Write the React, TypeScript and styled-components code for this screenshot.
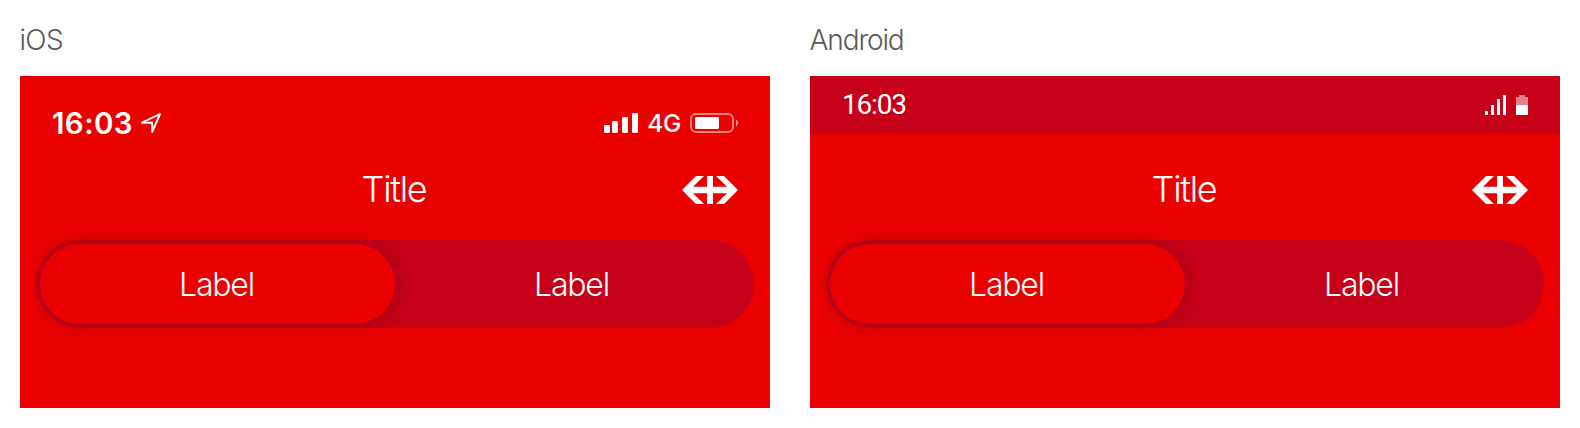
import React from 'react';
import styled, { createGlobalStyle } from 'styled-components';

const red = '#eb0000';
const darkRed = '#c60018';

const GlobalStyle = createGlobalStyle`
  * { box-sizing: border-box; }
  body {
    margin: 0;
    background: #fff;
    font-family: Inter, "Liberation Sans", sans-serif;
  }
`;

const Page = styled.main`
  display: flex;
  gap: 40px;
  height: 428px;
  padding: 0 20px;
  overflow: hidden;
`;

const Platform = styled.section`
  width: 750px;
`;

const Heading = styled.h2<{ $tracking: number }>`
  margin: 0;
  height: 76px;
  padding-top: 20px;
  font-size: 28px;
  line-height: 41px;
  font-weight: 300;
  letter-spacing: ${(p) => p.$tracking}px;
  text-indent: -0.5px;
  color: #5a5a5a;
`;

const Screen = styled.div`
  display: flex;
  flex-direction: column;
  height: 332px;
  padding-bottom: 80px;
  background: ${red};
  color: #fff;
`;

const IosStatus = styled.div`
  display: flex;
  align-items: center;
  justify-content: space-between;
  height: 94px;
  padding: 0 32px;
`;

const AndroidStatus = styled(IosStatus)`
  height: 58px;
  background: ${darkRed};
`;

const Group = styled.div<{ $gap: number }>`
  display: flex;
  align-items: center;
  gap: ${(p) => p.$gap}px;
`;

const IosTime = styled.span`
  font-size: 29.5px;
  line-height: 36px;
  font-weight: 600;
  letter-spacing: 0.4px;
`;

const Network = styled.span`
  font-size: 24.5px;
  line-height: 30px;
  font-weight: 550;
  letter-spacing: -0.3px;
`;

const AndroidTime = styled.span`
  font-family: Roboto, sans-serif;
  font-size: 28px;
  line-height: 34px;
  letter-spacing: -1.2px;
`;

const NavBar = styled.header`
  display: grid;
  grid-template-columns: 1fr auto 1fr;
  align-items: center;
  height: 40px;
  margin: auto 32px 30px;
`;

const Title = styled.h1`
  grid-column: 2;
  margin: 0;
  padding: 0 2px 2px 0;
  font-size: 36px;
  line-height: 38px;
  font-weight: 300;
  letter-spacing: -1.3px;
`;

const LogoSlot = styled.div`
  display: flex;
  justify-content: flex-end;
`;

const Segmented = styled.div`
  display: flex;
  height: 88px;
  margin: 0 16px;
  padding: 4px;
  border-radius: 44px;
  background: ${darkRed};
`;

const Segment = styled.button<{ $active?: boolean }>`
  flex: 1;
  padding: 2px 2px 0 0;
  border: 0;
  border-radius: 40px;
  background: ${(p) => (p.$active ? red : 'transparent')};
  box-shadow: ${(p) => (p.$active ? '0 0 20px rgba(0, 0, 0, 0.2)' : 'none')};
  color: #fff;
  font: 300 32px/40px Inter, "Liberation Sans", sans-serif;
  letter-spacing: -1.2px;
`;

const Logo = () => (
  <svg width="56" height="28" viewBox="0 0 56 28" fill="#fff">
    <path d="M14 0H22L11 10.8H25V0H31V10.8H45L34 0H42L56 14L42 28H34L45 17.2H31V28H25V17.2H11L22 28H14L0 14Z" />
  </svg>
);

const LocationArrow = () => (
  <svg width="20" height="20" viewBox="0 0 20 20" fill="none" stroke="#fff" strokeWidth="1.9" strokeLinejoin="round">
    <path d="M19 1L1 9.7H11.2V19Z" />
  </svg>
);

const IosSignal = () => (
  <svg width="34" height="20" viewBox="0 0 34 20" fill="#fff">
    <rect x="0" y="12" width="6" height="8" rx="1.4" />
    <rect x="8" y="8" width="6" height="12" rx="1.4" />
    <rect x="18" y="4" width="6" height="16" rx="1.4" />
    <rect x="28" y="0" width="6" height="20" rx="1.4" />
  </svg>
);

const IosBattery = () => (
  <svg width="48" height="20" viewBox="0 0 48 20">
    <rect x="1" y="1" width="42" height="18" rx="5" fill="none" stroke="#fff" strokeOpacity="0.5" strokeWidth="2" />
    <rect x="5" y="4" width="24" height="12" rx="1.5" fill="#fff" />
    <path d="M46 6.5Q48 7.6 48 10T46 13.5Z" fill="#fff" fillOpacity="0.7" />
  </svg>
);

const AndroidSignal = () => (
  <svg width="21" height="20" viewBox="0 0 21 20" fill="#fff">
    <path d="M0 16H3V20H0ZM6 10H9V20H6ZM12 4H15V20H12ZM18 0H21V20H18Z" />
  </svg>
);

const AndroidBattery = () => (
  <svg width="12" height="20" viewBox="0 0 12 20" fill="#fff">
    <path d="M3 0H9V2H12V10H0V2H3Z" fillOpacity="0.5" />
    <path d="M0 10H12V20H0Z" />
  </svg>
);

const Content = () => (
  <>
    <NavBar>
      <Title>Title</Title>
      <LogoSlot><Logo /></LogoSlot>
    </NavBar>
    <Segmented>
      <Segment $active>Label</Segment>
      <Segment>Label</Segment>
    </Segmented>
  </>
);

export default function App() {
  return (
    <>
      <GlobalStyle />
      <Page>
        <Platform>
          <Heading $tracking={-0.7}>iOS</Heading>
          <Screen>
            <IosStatus>
              <Group $gap={8}>
                <IosTime>16:03</IosTime>
                <LocationArrow />
              </Group>
              <Group $gap={9}>
                <IosSignal />
                <Network>4G</Network>
                <IosBattery />
              </Group>
            </IosStatus>
            <Content />
          </Screen>
        </Platform>
        <Platform>
          <Heading $tracking={-1.1}>Android</Heading>
          <Screen>
            <AndroidStatus>
              <AndroidTime>16:03</AndroidTime>
              <Group $gap={10}>
                <AndroidSignal />
                <AndroidBattery />
              </Group>
            </AndroidStatus>
            <Content />
          </Screen>
        </Platform>
      </Page>
    </>
  );
}
